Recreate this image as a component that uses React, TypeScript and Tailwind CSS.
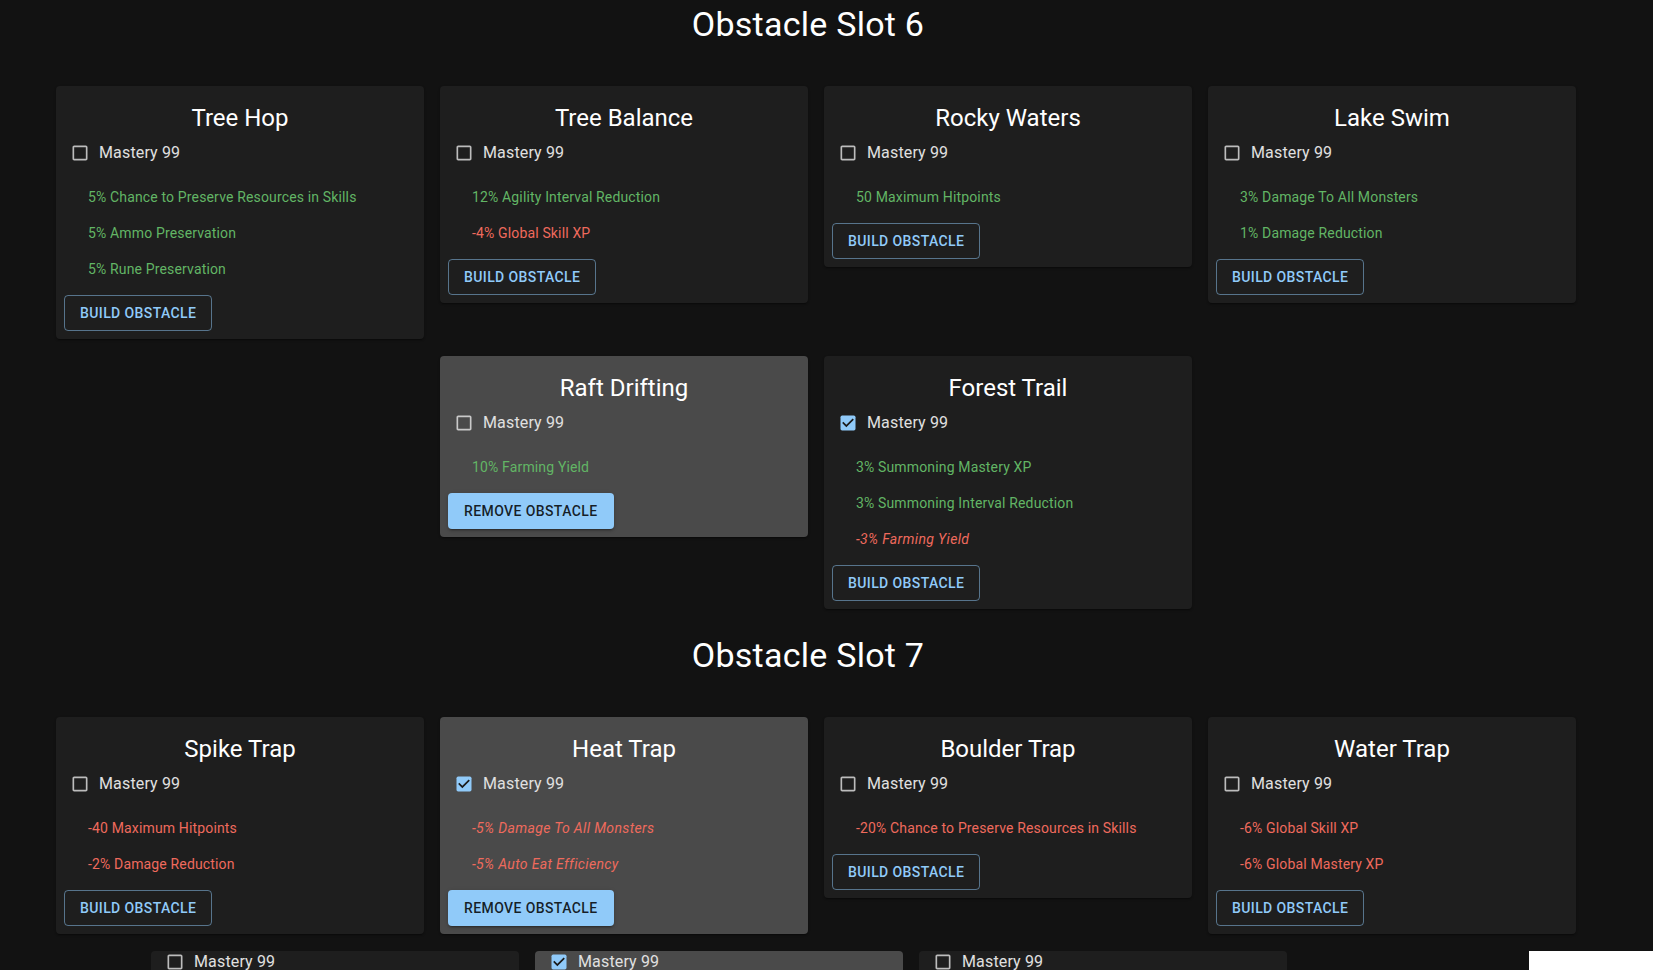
type Effect = { text: string; bad?: boolean };

type Obstacle = {
  name: string;
  effects: Effect[];
  checked?: boolean;
  built?: boolean;
};

const slot6: Obstacle[] = [
  {
    name: "Tree Hop",
    effects: [
      { text: "5% Chance to Preserve Resources in Skills" },
      { text: "5% Ammo Preservation" },
      { text: "5% Rune Preservation" },
    ],
  },
  {
    name: "Tree Balance",
    effects: [{ text: "12% Agility Interval Reduction" }, { text: "-4% Global Skill XP", bad: true }],
  },
  { name: "Rocky Waters", effects: [{ text: "50 Maximum Hitpoints" }] },
  {
    name: "Lake Swim",
    effects: [{ text: "3% Damage To All Monsters" }, { text: "1% Damage Reduction" }],
  },
  { name: "Raft Drifting", built: true, effects: [{ text: "10% Farming Yield" }] },
  {
    name: "Forest Trail",
    checked: true,
    effects: [
      { text: "3% Summoning Mastery XP" },
      { text: "3% Summoning Interval Reduction" },
      { text: "-3% Farming Yield", bad: true },
    ],
  },
];

const slot7: Obstacle[] = [
  {
    name: "Spike Trap",
    effects: [
      { text: "-40 Maximum Hitpoints", bad: true },
      { text: "-2% Damage Reduction", bad: true },
    ],
  },
  {
    name: "Heat Trap",
    checked: true,
    built: true,
    effects: [
      { text: "-5% Damage To All Monsters", bad: true },
      { text: "-5% Auto Eat Efficiency", bad: true },
    ],
  },
  {
    name: "Boulder Trap",
    effects: [{ text: "-20% Chance to Preserve Resources in Skills", bad: true }],
  },
  {
    name: "Water Trap",
    effects: [
      { text: "-6% Global Skill XP", bad: true },
      { text: "-6% Global Mastery XP", bad: true },
    ],
  },
];

function MasteryBox({ checked }: { checked?: boolean }) {
  if (checked) {
    return (
      <svg viewBox="0 0 24 24" className="h-5 w-5 shrink-0">
        <rect x="3" y="3" width="18" height="18" rx="2" fill="#90caf9" />
        <path d="M10 17l-5-5 1.41-1.41L10 14.17l7.59-7.59L19 8l-9 9z" fill="#1b1b1b" />
      </svg>
    );
  }
  return (
    <svg viewBox="0 0 24 24" className="h-5 w-5 shrink-0" fill="rgba(255,255,255,0.7)">
      <path d="M19 5v14H5V5h14m0-2H5c-1.1 0-2 .9-2 2v14c0 1.1.9 2 2 2h14c1.1 0 2-.9 2-2V5c0-1.1-.9-2-2-2z" />
    </svg>
  );
}

function MasteryRow({ checked, className }: { checked?: boolean; className: string }) {
  return (
    <div className={`flex items-center pl-[6px] ${className}`}>
      <MasteryBox checked={checked} />
      <span className="ml-[9px] text-base leading-6 tracking-[0.15px] text-[#e0e0e0]">Mastery 99</span>
    </div>
  );
}

function ObstacleCard({ obstacle }: { obstacle: Obstacle }) {
  return (
    <div
      className={`w-[368px] rounded p-2 shadow-[0_2px_1px_-1px_rgba(0,0,0,0.2),0_1px_1px_rgba(0,0,0,0.14),0_1px_3px_rgba(0,0,0,0.12)] ${
        obstacle.built ? "bg-[#4a4a4a]" : "bg-[#1e1e1e]"
      }`}
    >
      <h5 className="mt-2 text-center text-2xl leading-8 text-white">{obstacle.name}</h5>
      <MasteryRow checked={obstacle.checked} className="h-[38px]" />
      <ul className="pt-[7px]">
        {obstacle.effects.map((effect) => (
          <li
            key={effect.text}
            className={`flex h-9 items-center pl-6 text-sm leading-5 ${
              effect.bad ? "text-[#ef6a5d]" : "text-[#62b565]"
            } ${effect.bad && obstacle.checked ? "italic tracking-[0.35px]" : "tracking-[0.15px]"}`}
          >
            {effect.text}
          </li>
        ))}
      </ul>
      {obstacle.built ? (
        <button className="mt-2 inline-flex h-9 items-center rounded bg-[#90caf9] px-4 text-sm font-medium uppercase tracking-[0.4px] text-black/85 shadow-[0_3px_1px_-2px_rgba(0,0,0,0.2),0_2px_2px_rgba(0,0,0,0.14),0_1px_5px_rgba(0,0,0,0.12)]">
          Remove Obstacle
        </button>
      ) : (
        <button className="mt-2 inline-flex h-9 items-center rounded border border-[#90caf9]/50 px-[15px] text-sm font-medium uppercase tracking-[0.4px] text-[#90caf9]">
          Build Obstacle
        </button>
      )}
    </div>
  );
}

function SlotSection({ title, obstacles, className }: { title: string; obstacles: Obstacle[]; className: string }) {
  return (
    <section className={className}>
      <h4 className="pr-4 text-center text-[34px] leading-[42px] tracking-[0.25px] text-white">{title}</h4>
      <div className="mt-[41px] flex flex-wrap items-start justify-center gap-x-4 gap-y-[17px]">
        {obstacles.map((obstacle) => (
          <ObstacleCard key={obstacle.name} obstacle={obstacle} />
        ))}
      </div>
    </section>
  );
}

export default function App() {
  return (
    <div className="h-[970px] w-full overflow-hidden bg-[#121212] font-['Roboto',sans-serif]">
      <div className="w-[1632px]">
        <SlotSection title="Obstacle Slot 6" obstacles={slot6} className="pt-[3px]" />
        <SlotSection title="Obstacle Slot 7" obstacles={slot7} className="mt-[25px]" />
      </div>
      <div className="mt-[17px] flex items-start gap-4 pl-[151px]">
        {[false, true, false].map((checked, i) => (
          <div key={i} className={`h-20 w-[368px] rounded-t p-2 pt-0 ${checked ? "bg-[#4a4a4a]" : "bg-[#1e1e1e]"}`}>
            <MasteryRow checked={checked} className="h-[22px]" />
          </div>
        ))}
        <div className="ml-auto h-20 w-[124px] bg-white" />
      </div>
    </div>
  );
}
